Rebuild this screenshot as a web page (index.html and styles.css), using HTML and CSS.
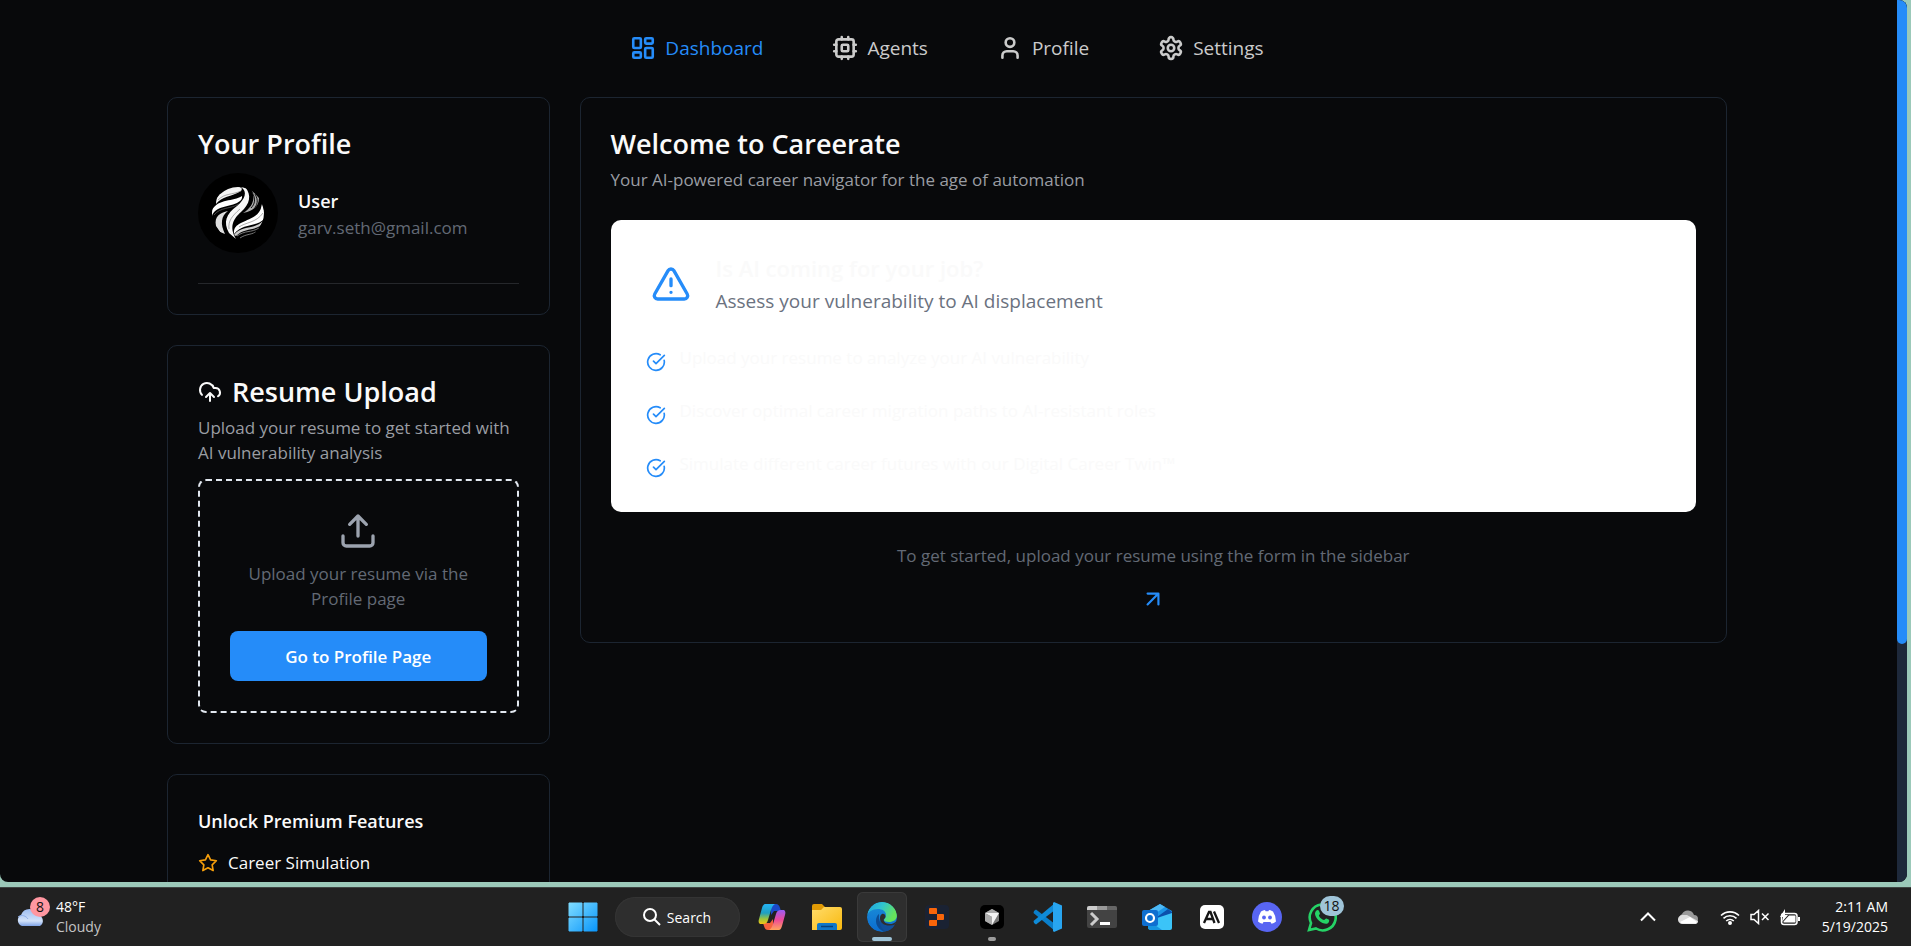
FILE: index.html
```html
<!DOCTYPE html>
<html lang="en">
<head>
<meta charset="utf-8">
<meta name="viewport" content="width=device-width, initial-scale=1">
<title>Careerate</title>
<link rel="stylesheet" href="styles.css">
</head>
<body>
<div class="desktop">
  <div class="window">
    <div class="page">
      <nav class="nav" aria-label="Main">
        <a class="nav-link active" href="#"><svg class="icon" viewBox="0 0 24 24"><rect x="3" y="3" width="7" height="9" rx="1"/><rect x="14" y="3" width="7" height="5" rx="1"/><rect x="14" y="12" width="7" height="9" rx="1"/><rect x="3" y="16" width="7" height="5" rx="1"/></svg>Dashboard</a>
        <a class="nav-link" href="#"><svg class="icon" viewBox="0 0 24 24"><rect x="4" y="4" width="16" height="16" rx="2"/><rect x="9" y="9" width="6" height="6" rx="1"/><path d="M15 2v2M15 20v2M2 15h2M2 9h2M20 15h2M20 9h2M9 2v2M9 20v2"/></svg>Agents</a>
        <a class="nav-link" href="#"><svg class="icon" viewBox="0 0 24 24"><circle cx="12" cy="7" r="4"/><path d="M19 21v-2a4 4 0 0 0-4-4H9a4 4 0 0 0-4 4v2"/></svg>Profile</a>
        <a class="nav-link" href="#"><svg class="icon" viewBox="0 0 24 24"><path d="M12.22 2h-.44a2 2 0 0 0-2 2v.18a2 2 0 0 1-1 1.73l-.43.25a2 2 0 0 1-2 0l-.15-.08a2 2 0 0 0-2.73.73l-.22.38a2 2 0 0 0 .73 2.73l.15.1a2 2 0 0 1 1 1.72v.51a2 2 0 0 1-1 1.74l-.15.09a2 2 0 0 0-.73 2.73l.22.38a2 2 0 0 0 2.73.73l.15-.08a2 2 0 0 1 2 0l.43.25a2 2 0 0 1 1 1.73V20a2 2 0 0 0 2 2h.44a2 2 0 0 0 2-2v-.18a2 2 0 0 1 1-1.73l.43-.25a2 2 0 0 1 2 0l.15.08a2 2 0 0 0 2.73-.73l.22-.39a2 2 0 0 0-.73-2.73l-.15-.08a2 2 0 0 1-1-1.74v-.5a2 2 0 0 1 1-1.74l.15-.09a2 2 0 0 0 .73-2.73l-.22-.38a2 2 0 0 0-2.73-.73l-.15.08a2 2 0 0 1-2 0l-.43-.25a2 2 0 0 1-1-1.73V4a2 2 0 0 0-2-2z"/><circle cx="12" cy="12" r="3"/></svg>Settings</a>
      </nav>

      <div class="layout">
        <aside class="sidebar">
          <section class="card profile">
            <h2 class="card-title">Your Profile</h2>
            <div class="identity">
              <svg class="avatar" viewBox="0 0 80 80" role="img" aria-label="User avatar">
                <defs><clipPath id="orb"><circle cx="40" cy="40" r="26"/></clipPath></defs>
                <circle cx="40" cy="40" r="40" fill="#000"/>
                <g clip-path="url(#orb)">
                  <path d="M18 31C24 23 33 24 43 18C46 14 40 13 34 13C24 15 18 22 18 31Z" fill="#f4f4f4"/>
                  <path d="M13 48C14 33 27 35 39 30C45 27 44 24 44 23C35 29 21 25 14 37Z" fill="#fff"/>
                  <path d="M43 14C50 19 47 26 39 33C28 41 25 49 31 60L38 66C31 54 35 46 43 39C52 31 54 22 47 14Z" fill="#f7f7f7"/>
                  <path d="M18 53C16 43 22 40 30 38C23 43 22 51 27 61L22 59Z" fill="#ddd"/>
                  <path d="M53 16C58 25 55 34 45 40C56 38 61 33 61 25Z" fill="#aaa"/>
                  <path d="M54 19C58 26 57 31 53 35M57 21C61 28 59 32 56 36" stroke="#111" fill="none"/>
                  <path d="M36 61C35 50 46 50 57 43C64 38 63 33 64 31L68 44C60 55 45 49 36 61Z" fill="#fff"/>
                  <path d="M36 62C43 52 56 57 65 48L62 53C54 58 46 55 38 63Z" fill="#ccc"/>
                  <path d="M39 63C47 57 53 60 61 55M42 65C48 61 52 62 58 59" stroke="#777" fill="none"/>
                  <path d="M20 27C27 20 34 22 43 18M16 42C22 34 33 36 41 31M31 56C30 48 34 43 42 36M41 54C48 49 58 50 65 40" stroke="#777" stroke-width=".6" fill="none"/>
                </g>
              </svg>
              <div>
                <div class="name">User</div>
                <div class="email">garv.seth@gmail.com</div>
              </div>
            </div>
            <hr class="rule">
          </section>

          <section class="card">
            <h2 class="card-title with-icon"><svg class="icon" viewBox="0 0 24 24"><path d="M12 13v8M4 14.899A7 7 0 1 1 15.71 8h1.79a4.5 4.5 0 0 1 2.5 8.242M8 17l4-4 4 4"/></svg>Resume Upload</h2>
            <p class="lead">Upload your resume to get started with AI vulnerability analysis</p>
            <div class="dropzone">
              <svg class="icon icon-lg" viewBox="0 0 24 24"><path d="M21 15v4a2 2 0 0 1-2 2H5a2 2 0 0 1-2-2v-4M17 8l-5-5-5 5M12 3v12"/></svg>
              <p class="hint">Upload your resume via the Profile page</p>
              <button class="button" type="button">Go to Profile Page</button>
            </div>
          </section>

          <section class="card premium">
            <h3 class="premium-title">Unlock Premium Features</h3>
            <ul class="features">
              <li><svg class="icon star" viewBox="0 0 24 24"><path d="M12 2l3.09 6.26L22 9.27l-5 4.87 1.18 6.88L12 17.77l-6.18 3.25L7 14.14 2 9.27l6.91-1.01z"/></svg>Career Simulation</li>
            </ul>
          </section>
        </aside>

        <main class="card welcome">
          <h1 class="card-title">Welcome to Careerate</h1>
          <p class="lead">Your AI-powered career navigator for the age of automation</p>
          <section class="alert">
            <div class="alert-head">
              <svg class="icon icon-lg" viewBox="0 0 24 24"><path d="m21.73 18-8-14a2 2 0 0 0-3.48 0l-8 14A2 2 0 0 0 4 21h16a2 2 0 0 0 1.73-3M12 9v4M12 17h.01"/></svg>
              <div>
                <h2 class="alert-title">Is AI coming for your job?</h2>
                <p class="alert-sub">Assess your vulnerability to AI displacement</p>
              </div>
            </div>
            <ul class="checks">
              <li><svg class="icon" viewBox="0 0 24 24"><path d="M21.801 10A10 10 0 1 1 17 3.335M9 11l3 3L22 4"/></svg>Upload your resume to analyze your AI vulnerability</li>
              <li><svg class="icon" viewBox="0 0 24 24"><path d="M21.801 10A10 10 0 1 1 17 3.335M9 11l3 3L22 4"/></svg>Discover optimal career migration paths to AI-resistant roles</li>
              <li><svg class="icon" viewBox="0 0 24 24"><path d="M21.801 10A10 10 0 1 1 17 3.335M9 11l3 3L22 4"/></svg>Simulate different career futures with our Digital Career Twin™</li>
            </ul>
          </section>
          <div class="start">
            <p>To get started, upload your resume using the form in the sidebar</p>
            <svg class="icon" viewBox="0 0 24 24"><path d="M7 7h10v10M7 17 17 7"/></svg>
          </div>
        </main>
      </div>
    </div>
    <div class="scroll-track"><div class="scroll-thumb"></div></div>
  </div>
</div>

<footer class="taskbar">
  <div class="weather">
    <span class="weather-icon">
      <svg viewBox="0 0 30 20" width="30" height="20"><defs><linearGradient id="cl" x1="0" y1="0" x2="0" y2="1"><stop offset="0" stop-color="#9dbdf2"/><stop offset=".7" stop-color="#d2e2fa"/><stop offset="1" stop-color="#7fa3e6"/></linearGradient></defs><path d="M6 19a6 6 0 0 1-1-11A9 9 0 0 1 22 8a6 6 0 0 1 2 11z" fill="url(#cl)"/><path d="M2 10c4-3 8-1 10 2" stroke="#8fb0ec" fill="none"/></svg>
      <span class="badge badge-pink">8</span>
    </span>
    <div class="two-line"><span>48°F</span><span class="dim">Cloudy</span></div>
  </div>

  <div class="apps">
    <button class="app start-app" type="button" aria-label="Start"><svg viewBox="0 0 30 30" width="30" height="30"><defs><linearGradient id="win" x1="0" y1="0" x2="1" y2="1"><stop offset="0" stop-color="#7fdcff"/><stop offset="1" stop-color="#0a96fb"/></linearGradient></defs><path d="M1 1h13v13H1zM16 1h13v13H16zM1 16h13v13H1zM16 16h13v13H16z" fill="url(#win)" stroke="url(#win)" stroke-width="1"/></svg></button>
    <button class="search" type="button"><svg viewBox="0 0 18 18" width="18" height="18" fill="none" stroke="#fff" stroke-width="2"><circle cx="7" cy="7" r="6"/><path d="M11.5 11.500 17 17"/></svg>Search</button>
    <button class="app" type="button" aria-label="Copilot"><svg viewBox="0 0 30 30" width="30" height="30"><defs><linearGradient id="cpa" x1="0" y1="0" x2="0" y2="1"><stop offset="0" stop-color="#25b4f5"/><stop offset=".45" stop-color="#1f9fc0"/><stop offset=".75" stop-color="#9fc53a"/><stop offset="1" stop-color="#f2c514"/></linearGradient><linearGradient id="cpb" x1="0" y1="0" x2="0" y2="1"><stop offset="0" stop-color="#9a5cf5"/><stop offset=".5" stop-color="#ee4a98"/><stop offset="1" stop-color="#ffa45c"/></linearGradient></defs><path d="M14 2h5c2 0 3 1 4 4l1 3h-7l-3 4z" fill="#1a49c8"/><path d="M16 28h-5c-2 0-3-1-4-4l-1-3h7l3-4z" fill="#f5623d"/><path d="M8 2h10c-2 1-3 3-4 6l-3 10c-1 3-2 4-5 4H4c-2 0-3-2-2-5L5 6c1-3 2-4 3-4z" fill="url(#cpa)"/><path d="M22 28H12c2-1 3-3 4-6l3-10c1-3 2-4 5-4h2c2 0 3 2 2 5l-3 11c-1 3-2 4-3 4z" fill="url(#cpb)"/></svg></button>
    <button class="app" type="button" aria-label="File Explorer"><svg viewBox="0 0 30 30" width="30" height="30"><defs><linearGradient id="fo" x1="0" y1="0" x2="1" y2="1"><stop offset="0" stop-color="#ffdc6b"/><stop offset="1" stop-color="#f9b90e"/></linearGradient></defs><path d="M0 4a2 2 0 0 1 2-2h8l3 3h-1v4H0z" fill="#e09a05"/><path d="M0 8h9l3-3h16a2 2 0 0 1 2 2v19a2 2 0 0 1-2 2H0z" fill="url(#fo)"/><path d="M5 28v-5a2 2 0 0 1 2-2h16a2 2 0 0 1 2 2v5z" fill="#0f77c9"/><path d="M9 24.500h12" stroke="#07427c" stroke-width="1.500"/></svg></button>
    <button class="app current" type="button" aria-label="Microsoft Edge"><svg viewBox="0 0 30 30" width="30" height="30"><defs><linearGradient id="ea" x1="0" y1="0" x2="1" y2=".4"><stop offset="0" stop-color="#1b9ee0"/><stop offset=".5" stop-color="#30c5cf"/><stop offset="1" stop-color="#66e35a"/></linearGradient><linearGradient id="eb" x1="0" y1="0" x2="0" y2="1"><stop offset="0" stop-color="#1c8fd8"/><stop offset="1" stop-color="#0a6cd0"/></linearGradient><clipPath id="ec"><circle cx="15" cy="15" r="15"/></clipPath></defs><g clip-path="url(#ec)"><circle cx="15" cy="15" r="15" fill="url(#eb)"/><path d="M0 14C1 6 7 0 15 0c9 0 15 6 15 13 0 5-4 7-8 7-3 0-5-1-5-2s2-2 2-5c0-4-4-6-8-6-6 0-10 3-11 7z" fill="url(#ea)"/><path d="M12 12c-5 4-4 15 6 18 4-1 8-4 10-7-6 3-15 1-16-6-.2-2 0-4 0-5z" fill="#0d4b93"/><path d="M15 12c3-1 5 3 2 5-1 2 1 5 6 5 2 0 4-.500 6-2.500l2-1v3l-3 2.500c-8 3-15 0-15-7 0-2 0-4 2-5z" fill="#2e2e2e"/><path d="M13 16c0 6 7 9.500 15.500 6.500-2 3.500-5 6.500-9 7.500-5-3-8-8-6.500-14z" fill="#114f9a"/></g></svg></button>
    <button class="app" type="button" aria-label="Replit"><svg viewBox="0 0 24 24" width="24" height="24"><rect width="24" height="24" rx="4" fill="#1a2233"/><path d="M5 3h6a1 1 0 0 1 1 1v5H5a1 1 0 0 1-1-1V4a1 1 0 0 1 1-1zM12 9h6a1 1 0 0 1 1 1v4a1 1 0 0 1-1 1h-6zM5 15h7v5a1 1 0 0 1-1 1H5a1 1 0 0 1-1-1v-4a1 1 0 0 1 1-1z" fill="#f8650a"/></svg></button>
    <button class="app running" type="button" aria-label="Cursor"><svg viewBox="0 0 24 24" width="24" height="24"><rect width="24" height="24" rx="5" fill="#000"/><path d="M12 4l7 4v8l-7 4-7-4V8z" fill="#777"/><path d="M5 8l7-4 7 4z" fill="#aaa"/><path d="M5 8h14l-7 12v-8z" fill="#f2f2f2"/><path d="M5 8l7 4v8l-7-4z" fill="#aaa"/></svg></button>
    <button class="app" type="button" aria-label="Visual Studio Code"><svg viewBox="0 0 30 30" width="30" height="30"><path d="M2 9l2-1.500L23 22v7L1.500 11z" fill="#0a7fcb"/><path d="M2 21l2 1.500L23 8V1L1.500 19z" fill="#0f8bd8"/><path d="M22 0l8 3.500v23L22 30l-1-1V1z" fill="#28a5f0"/></svg></button>
    <button class="app" type="button" aria-label="Terminal"><svg viewBox="0 0 30 22" width="30" height="22"><rect width="30" height="22" rx="2" fill="#434343"/><path d="M0 4V2a2 2 0 0 1 2-2h8v4z" fill="#ccc"/><path d="M10 0h10v4H10z" fill="#999"/><path d="M20 0h8a2 2 0 0 1 2 2v2H20z" fill="#666"/><path d="M4 7l6 6-6 6" stroke="#ccc" stroke-width="3" fill="none"/><path d="M13 17.500h10" stroke="#fff" stroke-width="3"/></svg></button>
    <button class="app" type="button" aria-label="Outlook"><svg viewBox="0 0 30 28" width="30" height="28"><path d="M6 8L18 1l12 7v4L17 20 6 16z" fill="#1b95e8"/><path d="M6 8L18 1l5 3L8 14z" fill="#4db9f5"/><path d="M15 14l11-8 4 3v4l-13 8z" fill="#0b50ad"/><path d="M6 18l24-8v15a2 2 0 0 1-2 2H9a3 3 0 0 1-3-3z" fill="#3bc4f8"/><path d="M6 17l14 10H9a3 3 0 0 1-3-3z" fill="#1695e0"/><rect y="7" width="16" height="16" rx="2" fill="#0f6fd0"/><circle cx="8" cy="15" r="4" fill="none" stroke="#fff" stroke-width="2.200"/></svg></button>
    <button class="app" type="button" aria-label="Claude"><svg viewBox="0 0 24 24" width="24" height="24"><rect width="24" height="24" rx="5" fill="#fff"/><path d="M4 18L9 7h1.500l4 11M6 14h7M14 6.500L19 18" stroke="#151515" stroke-width="2.300" fill="none"/></svg></button>
    <button class="app" type="button" aria-label="Discord"><svg viewBox="0 0 30 30" width="30" height="30"><circle cx="15" cy="15" r="15" fill="#5865f2"/><path d="M9 9.500Q11 8.200 13 8l.6 1.200h2.800L17 8q2 .2 4 1.500 3 4.500 3 10-2 1.700-4.500 2.200l-1-1.800h-7l-1 1.800Q8 21.200 6 19.500q0-5.500 3-10z" fill="#fff"/><circle cx="12" cy="15.500" r="1.900" fill="#5865f2"/><circle cx="18" cy="15.500" r="1.900" fill="#5865f2"/></svg></button>
    <button class="app" type="button" aria-label="WhatsApp"><svg viewBox="0 0 30 30" width="30" height="30"><path d="M2 28l2-7A13 13 0 1 1 9 26.500z" fill="none" stroke="#25d366" stroke-width="2.600"/><path d="M9 9c1-1.500 2.500-1.500 3 0l1 2.500c0 1-1.500 1.500-1 2.500 1 2 3 3.500 5 4 1 0 1.500-2 2.500-1.500l2.500 1.300c.6.500 0 3-1.500 3.700-4 1.500-12-4-12.500-9.500 0-1.200.5-2.300 1-3z" fill="#25d366"/></svg><span class="badge badge-blue">18</span></button>
  </div>

  <div class="tray">
    <svg viewBox="0 0 16 10" width="16" height="10" fill="none" stroke="#fff" stroke-width="2"><path d="M1 8.500l7-7 7 7"/></svg>
    <svg class="cloud" viewBox="0 0 20 14" width="20" height="14"><path d="M5 13a5 5 0 0 1-1-9A6.500 6.500 0 0 1 16 5a4 4 0 0 1 0 8z" fill="#9a9a9a"/><path d="M4 5l5 0 11 6a3 3 0 0 1-4 3H5a4 4 0 0 1-1-9z" fill="#ddd"/><path d="M2 12l10-5 7 5a3 3 0 0 1-3 1.500H5A4 4 0 0 1 2 12z" fill="#fff"/></svg>
    <div class="status">
      <svg viewBox="0 0 20 15" width="20" height="15" fill="none" stroke="#fff" stroke-width="1.600"><path d="M1 5.500a13 13 0 0 1 18 0M3.500 8.300a9.500 9.500 0 0 1 13 0M6.200 11a5.500 5.500 0 0 1 7.600 0"/><circle cx="10" cy="13" r="1.200" fill="#fff"/></svg>
      <svg viewBox="0 0 20 16" width="20" height="16" fill="none" stroke="#fff" stroke-width="1.500"><path d="M1 5.500h3l4.500-4v13l-4.500-4H1zM12 4.500l6.500 6.500M18.500 4.500L12 11"/></svg>
      <svg viewBox="0 0 20 17" width="20" height="17"><rect x="1.500" y="4.500" width="15.500" height="11" rx="2.500" fill="none" stroke="#fff" stroke-width="1.500"/><path d="M9 6.500h6.500v7H3.500v-1z" fill="#fff"/><path d="M18 8h2v4h-2zM5 0L0 8h3l-1 5 6-7H5z" fill="#fff"/></svg>
    </div>
    <div class="two-line clock"><span>2:11 AM</span><span>5/19/2025</span></div>
  </div>
</footer>
</body>
</html>
```

FILE: styles.css
```css
* { box-sizing: border-box; }

body {
  margin: 0;
  height: 100vh;
  display: flex;
  flex-direction: column;
  overflow: hidden;
  background: #212121;
  color: #fafafa;
  font-family: "Open Sans", "Noto Sans", sans-serif;
}

h1, h2, h3, p, ul { margin: 0; padding: 0; }
ul { list-style: none; }
button { font: inherit; color: inherit; border: 0; }

.icon {
  width: 24px;
  height: 24px;
  flex: none;
  fill: none;
  stroke: currentColor;
  stroke-width: 2;
  stroke-linecap: round;
  stroke-linejoin: round;
}
.icon-lg { width: 40px; height: 40px; }

/* Browser window */
.desktop {
  flex: 1;
  min-height: 0;
  display: flex;
  padding: 0 4px 5px 0;
  background: #9bc9b9;
}
.window {
  flex: 1;
  min-width: 0;
  display: flex;
  overflow: hidden;
  border-radius: 0 8px 8px 8px;
  background: #08090b;
}
.page {
  flex: 1;
  min-width: 0;
  overflow: hidden;
  padding: 0 23px 0 20px;
}
.scroll-track { width: 10px; background: #1e293b; }
.scroll-thumb { height: 73%; border-radius: 0 0 5px 5px; background: #258cf9; }

/* Navigation */
.nav {
  height: 97px;
  display: flex;
  align-items: center;
  justify-content: center;
  gap: 69px;
  padding-bottom: 2px;
}
.nav-link {
  display: flex;
  align-items: center;
  gap: 9px;
  font-size: 19px;
  line-height: 30px;
  color: #cbcbcb;
  text-decoration: none;
}
.nav-link.active { color: #258cf9; }
.nav .icon { width: 26px; height: 26px; stroke-width: 2.4; }

/* Cards */
.layout {
  max-width: 1560px;
  margin: 0 auto;
  display: grid;
  grid-template-columns: 1fr 3fr;
  align-items: start;
  gap: 30px;
}
.sidebar { display: grid; gap: 30px; }
.card {
  min-width: 0;
  padding: 30px;
  border: 1px solid #1c2531;
  border-radius: 10px;
}
.card-title {
  font-size: 27px;
  line-height: 32px;
  font-weight: 600;
}
.with-icon { display: flex; align-items: center; gap: 10px; }
.lead { margin-top: 7px; font-size: 17px; line-height: 25px; color: #9a9da3; }

.identity { display: flex; align-items: center; gap: 20px; padding-top: 13px; }
.avatar { width: 80px; height: 80px; }
.name { font-size: 18px; line-height: 28px; font-weight: 600; }
.email { font-size: 17px; line-height: 25px; color: #636975; }
.rule { margin: 30px 0 0; border: 0; border-top: 1px solid #25272b; }

.dropzone {
  display: flex;
  flex-direction: column;
  align-items: center;
  margin-top: 14px;
  padding: 30px;
  border: 2px dashed #e2e8f0;
  border-radius: 8px;
  color: #9ca3af;
}
.hint {
  margin: 10px 0 20px;
  font-size: 17px;
  line-height: 25px;
  text-align: center;
  color: #636975;
}
.button {
  width: 100%;
  height: 50px;
  border-radius: 8px;
  background: #258cf9;
  color: #fff;
  font-size: 17px;
  font-weight: 600;
}

.premium-title { padding-top: 4px; font-size: 18px; line-height: 25px; font-weight: 600; }
.features li { display: flex; align-items: center; gap: 10px; padding-top: 16px; font-size: 17px; line-height: 25px; }
.star { width: 20px; height: 20px; color: #f59e0b; }

/* Welcome panel */
.alert {
  margin-top: 28px;
  padding: 31px 35px 34px;
  border-radius: 10px;
  background: #fff;
}
.alert-head { display: flex; align-items: center; gap: 25px; padding-left: 5px; color: #258cf9; }
.alert-title { font-size: 22px; line-height: 35px; font-weight: 600; color: #fafafa; }
.alert-sub { font-size: 19px; line-height: 30px; color: #6b7280; }
.checks { display: grid; gap: 26px; padding-top: 29px; }
.checks li { display: flex; align-items: flex-start; gap: 14px; font-size: 17px; line-height: 25px; color: #fafafa; }
.checks .icon { width: 20px; height: 20px; margin-top: 7px; color: #258cf9; }
.start {
  display: flex;
  flex-direction: column;
  align-items: center;
  gap: 18px;
  padding-top: 31px;
  font-size: 17px;
  line-height: 25px;
  color: #636975;
}
.start .icon { width: 26px; height: 26px; color: #258cf9; }

/* Taskbar */
.taskbar {
  display: grid;
  grid-template-columns: 1fr auto 1fr;
  align-items: center;
  height: 59px;
  padding-right: 7px;
  border-top: 1px solid #3d4542;
  background: #212121;
  color: #fff;
  font-size: 14px;
}
.two-line { display: flex; flex-direction: column; line-height: 20px; }
.dim { color: #c4c4c4; }
.weather { display: flex; align-items: center; gap: 10px; padding-left: 16px; }
.weather-icon { position: relative; display: flex; }
.badge {
  position: absolute;
  height: 20px;
  border-radius: 10px;
  color: #111;
  font-size: 14px;
  line-height: 20px;
  text-align: center;
}
.badge-pink { left: 14px; top: -10px; width: 20px; background: #ff97a1; }
.badge-blue { right: 3px; top: 4px; width: 24px; background: #9fc4d8; }

.apps { display: flex; align-items: center; gap: 5px; }
.app {
  position: relative;
  display: flex;
  align-items: center;
  justify-content: center;
  width: 50px;
  height: 50px;
  padding: 0;
  border-radius: 6px;
  background: none;
}
.current { background: #2e2e2e; box-shadow: inset 0 0 0 1px #3a3a3a; }
.current::after, .running::after {
  content: "";
  position: absolute;
  bottom: 1px;
  width: 8px;
  height: 4px;
  border-radius: 2px;
  background: #9c9c9c;
}
.current::after { width: 20px; background: #9fc4d8; }
.search {
  display: flex;
  align-items: center;
  justify-content: center;
  gap: 6px;
  width: 125px;
  height: 40px;
  margin: 0 2px;
  border-radius: 20px;
  background: #2e2e2e;
  box-shadow: inset 0 0 0 1px #343434;
}

.tray { display: flex; align-items: center; justify-content: flex-end; gap: 22px; padding-right: 16px; }
.status { display: flex; align-items: center; gap: 10px; }
.clock { text-align: right; }
```
